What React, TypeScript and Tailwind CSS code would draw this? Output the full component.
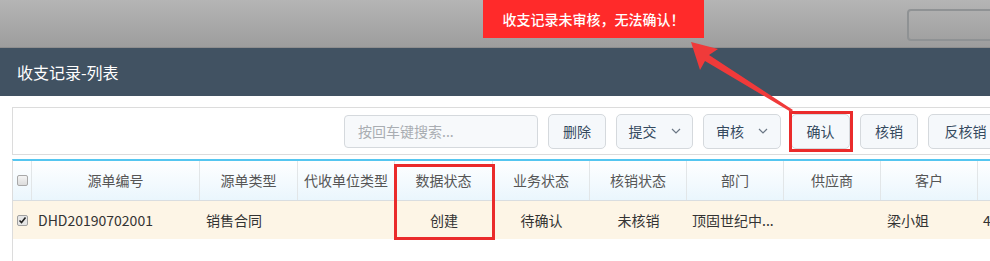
import React from "react";

const columns = [
  { title: "源单编号", w: "w-[168px]" },
  { title: "源单类型", w: "w-[98px]" },
  { title: "代收单位类型", w: "w-[97px]" },
  { title: "数据状态", w: "w-[98px]" },
  { title: "业务状态", w: "w-[97px]" },
  { title: "核销状态", w: "w-[97px]" },
  { title: "部门", w: "w-[97px]" },
  { title: "供应商", w: "w-[97px]" },
  { title: "客户", w: "w-[97px]" },
  { title: "", w: "w-[97px]" },
];

const Chevron = () => (
  <svg width="10" height="6" viewBox="0 0 10 6" className="ml-[14px]">
    <path d="M1 1l4 4 4-4" fill="none" stroke="#6b7785" strokeWidth="1.2" />
  </svg>
);

const ToolButton: React.FC<{ label: string; w: string; dropdown?: boolean }> = ({ label, w, dropdown }) => (
  <button
    className={`${w} h-[35px] shrink-0 rounded-[5px] border border-[#d5d9dd] bg-[#f5f8fb] text-[14px] text-[#34495e] flex items-center justify-center`}
  >
    {label}
    {dropdown && <Chevron />}
  </button>
);

export default function App() {
  return (
    <div
      className="relative w-[990px] h-[261px] overflow-hidden bg-white"
      style={{ fontFamily: '"Noto Sans CJK SC", "Noto Sans", sans-serif' }}
    >
      {/* dimmed top bar */}
      <div className="relative h-[48px] bg-gradient-to-b from-[#b5b5b5] to-[#9d9d9d] border-b border-[#8e8e8e]">
        <div className="absolute left-[907px] top-[9px] w-[100px] h-[32px] rounded-[4px] border-2 border-[#8f9294]" />
      </div>

      {/* page title */}
      <div className="h-[48px] bg-[#415262] flex items-center pl-[17px] text-white text-[16px]">收支记录-列表</div>

      {/* toolbar */}
      <div className="pl-[12px] pt-[11px]">
        <div className="h-[48px] w-[1000px] border border-[#dcdcdc] border-r-0 flex items-center gap-[10px] pl-[331px]">
          <div className="w-[194px] h-[33px] shrink-0 rounded-[4px] border border-[#d5d9dd] bg-[#f7f9fb] flex items-center pl-[13px] text-[14px] text-[#a9adb2]">
            按回车键搜索...
          </div>
          <ToolButton label="删除" w="w-[58px]" />
          <ToolButton label="提交" w="w-[77px]" dropdown />
          <ToolButton label="审核" w="w-[78px]" dropdown />
          <ToolButton label="确认" w="w-[59px]" />
          <ToolButton label="核销" w="w-[58px]" />
          <ToolButton label="反核销" w="w-[75px]" />
        </div>

        {/* table */}
        <div className="mt-[4px] w-[1000px] h-[110px] border-t-2 border-[#55c6f0] border-l border-l-[#dcdcdc]">
          <div className="flex h-[40px] bg-gradient-to-b from-white to-[#eaf6fd] border-b border-[#d9dde0] text-[14px] text-[#555]">
            <div className="w-[19px] shrink-0 border-r border-[#e2e6e8] flex items-center justify-center">
              <span className="w-[11px] h-[11px] rounded-[2px] border border-[#a8a8a8] bg-gradient-to-b from-[#f4f4f4] to-[#dcdcdc]" />
            </div>
            {columns.map((c, i) => (
              <div key={i} className={`${c.w} shrink-0 border-r border-[#e2e6e8] flex items-center justify-center`}>
                {c.title}
              </div>
            ))}
          </div>
          <div className="flex h-[38px] bg-[#fdf5e6] text-[14px] text-[#333]">
            <div className="w-[19px] shrink-0 flex items-center justify-center">
              <span className="w-[11px] h-[11px] rounded-[2px] border border-[#a0a0a0] bg-[#e6e6e6] flex items-center justify-center">
                <svg width="9" height="9" viewBox="0 0 9 9">
                  <path d="M1.5 4.5l2 2 4-5" fill="none" stroke="#222" strokeWidth="1.6" />
                </svg>
              </span>
            </div>
            <div className="w-[168px] shrink-0 flex items-center pl-[6px]">DHD20190702001</div>
            <div className="w-[98px] shrink-0 flex items-center pl-[6px]">销售合同</div>
            <div className="w-[97px] shrink-0" />
            <div className="w-[98px] shrink-0 flex items-center justify-center">创建</div>
            <div className="w-[97px] shrink-0 flex items-center justify-center">待确认</div>
            <div className="w-[97px] shrink-0 flex items-center justify-center">未核销</div>
            <div className="w-[97px] shrink-0 flex items-center pl-[5px]">顶固世纪中...</div>
            <div className="w-[97px] shrink-0" />
            <div className="w-[97px] shrink-0 flex items-center pl-[6px]">梁小姐</div>
            <div className="w-[97px] shrink-0 flex items-center pl-[5px]">4</div>
          </div>
        </div>
      </div>

      {/* annotation: toast */}
      <div className="absolute left-[483px] top-0 w-[221px] h-[38px] bg-[#ff2a2a] flex items-center justify-center text-white text-[14px] font-medium">
        收支记录未审核，无法确认！
      </div>

      {/* annotation: red boxes */}
      <div className="absolute left-[789px] top-[111px] w-[64px] h-[41px] border-[3px] border-[#ea2b2b]" />
      <div className="absolute left-[394px] top-[164px] w-[101px] h-[76px] border-[3px] border-[#ea2b2b]" />

      {/* annotation: arrow */}
      <svg className="absolute left-0 top-0" width="990" height="261" viewBox="0 0 990 261">
        <polygon points="691,42 718,49 709,55 793,110 791,112 705,61 700,70" fill="#f03a3a" />
      </svg>
    </div>
  );
}
